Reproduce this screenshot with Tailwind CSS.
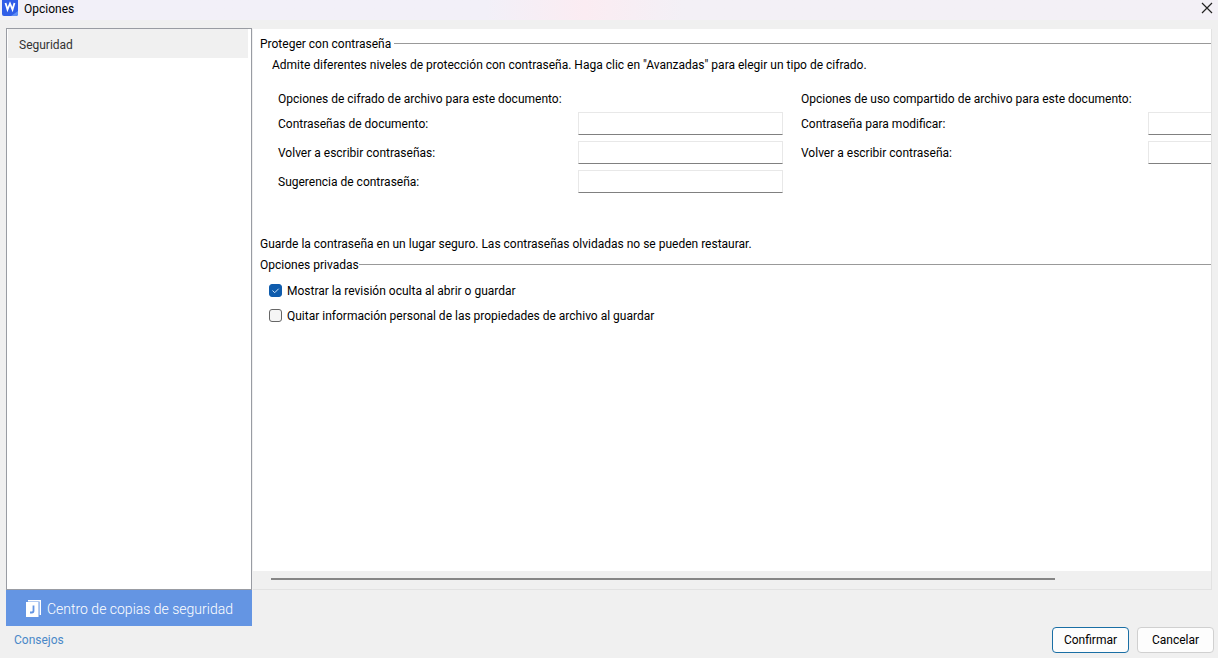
<!DOCTYPE html>
<html lang="es">
<head>
    <meta charset="UTF-8">
    <meta name="viewport" content="width=device-width, initial-scale=1">
    <title>Opciones</title>
    <script src="https://cdn.jsdelivr.net/npm/@tailwindcss/browser@4"></script>
</head>
<body class="flex min-h-screen flex-col bg-[#f0f0f0] font-[Roboto,'Open_Sans',sans-serif] text-xs leading-4 text-black">
    <!-- Barra de título -->
    <header class="flex h-5 items-start justify-between bg-linear-to-r from-[#f2f0f8] from-40% via-[#fbecf2] via-48% to-[#f3f0f6] to-56% pr-[3px] pl-[2px]">
        <div class="flex items-start gap-[6px]">
            <svg class="h-4 w-4" viewBox="0 0 16 16" aria-hidden="true">
                <path d="M0 0h16v14a2 2 0 0 1-2 2H2a2 2 0 0 1-2-2z" fill="#315de8"/>
                <path d="M9 16l7-5v3a2 2 0 0 1-2 2z" fill="#5f8df5"/>
                <path d="M3.500 3l2 6.500L8 3.500l2.500 6 2-6.500" fill="none" stroke="#fff" stroke-width="1.800"/>
            </svg>
            <h1 class="pt-px">Opciones</h1>
        </div>
        <button type="button" aria-label="Cerrar" class="p-[2px]">
            <svg class="h-3 w-3" viewBox="0 0 12 12" fill="none" stroke="#222" stroke-width="1.200">
                <path d="M1 1l10 10M11 1L1 11"/>
            </svg>
        </button>
    </header>

    <main class="flex flex-1 gap-px px-[6px] pt-2">
        <!-- Panel lateral -->
        <aside class="flex w-[246px] shrink-0 flex-col">
            <nav class="flex-1 border border-[#999ca3] bg-white pr-[3px] pl-px">
                <a href="#seguridad" class="block bg-[#f0f0f0] px-[11px] pt-2 pb-[5px] text-[#333]">Seguridad</a>
            </nav>
            <button type="button" class="flex h-9 items-center gap-[6px] bg-[#6495e3] pt-px pl-5 text-sm font-light text-white">
                <svg class="h-[17px] w-[15px]" viewBox="0 0 15 17" aria-hidden="true">
                    <path d="M2 .7h12.300V15" fill="none" stroke="#fff" stroke-width="1.400"/>
                    <rect y="2" width="12.500" height="15" fill="#fff"/>
                    <path d="M7.500 5.500v5.300q0 1.700-1.600 1.700H4" fill="none" stroke="#6495e3" stroke-width="1.800"/>
                </svg>
                Centro de copias de seguridad
            </button>
        </aside>

        <!-- Contenido -->
        <section id="seguridad" class="mt-px mb-9 flex min-w-0 flex-1 flex-col overflow-hidden border-r border-b border-[#e2e2e2] bg-white">
            <div class="flex-1 pt-[7px] pl-[7px]">
                <div class="flex items-center gap-[3px]">
                    <h2>Proteger con contraseña</h2>
                    <span class="mb-px h-px flex-1 bg-[#999]"></span>
                </div>
                <p class="mt-[5px] pl-3 whitespace-nowrap">Admite diferentes niveles de protección con contraseña. Haga clic en "Avanzadas" para elegir un tipo de cifrado.</p>

                <div class="mt-[18px] flex w-max gap-[18px] pl-[18px]">
                    <fieldset class="w-[505px]">
                        <legend class="mb-[5px]">Opciones de cifrado de archivo para este documento:</legend>
                        <div class="grid grid-cols-[300px_205px] items-center gap-y-[6px]">
                            <label for="clave">Contraseñas de documento:</label>
                            <input id="clave" type="password" class="h-[23px] border border-[#e8e8e8] border-b-[#808080] bg-white px-1">
                            <label for="clave2">Volver a escribir contraseñas:</label>
                            <input id="clave2" type="password" class="h-[23px] border border-[#e8e8e8] border-b-[#808080] bg-white px-1">
                            <label for="sugerencia">Sugerencia de contraseña:</label>
                            <input id="sugerencia" type="text" class="h-[23px] border border-[#e8e8e8] border-b-[#808080] bg-white px-1">
                        </div>
                    </fieldset>
                    <fieldset class="w-[552px]">
                        <legend class="mb-[5px]">Opciones de uso compartido de archivo para este documento:</legend>
                        <div class="grid grid-cols-[347px_205px] items-center gap-y-[6px]">
                            <label for="modificar">Contraseña para modificar:</label>
                            <input id="modificar" type="password" class="h-[23px] border border-[#e8e8e8] border-b-[#808080] bg-white px-1">
                            <label for="modificar2">Volver a escribir contraseña:</label>
                            <input id="modificar2" type="password" class="h-[23px] border border-[#e8e8e8] border-b-[#808080] bg-white px-1">
                        </div>
                    </fieldset>
                </div>

                <p class="mt-[43px]">Guarde la contraseña en un lugar seguro. Las contraseñas olvidadas no se pueden restaurar.</p>
                <div class="mt-[5px] flex items-center">
                    <h2>Opciones privadas</h2>
                    <span class="mb-px h-px flex-1 bg-[#999]"></span>
                </div>
                <div class="mt-[10px] flex flex-col gap-[9px] pl-[9px]">
                    <label class="flex items-start gap-[5px]">
                        <span class="mt-px grid h-[13px] w-[13px]">
                            <input type="checkbox" checked class="peer col-start-1 row-start-1 h-[13px] w-[13px] appearance-none rounded-[3px] border border-[#666] bg-[#f5f5f5] checked:border-[#0f5cad] checked:bg-[#0f5cad]">
                            <svg class="pointer-events-none invisible col-start-1 row-start-1 h-[13px] w-[13px] peer-checked:visible" viewBox="0 0 13 13" fill="none" stroke="#cfe4f8">
                                <path d="M3.500 6.500l2.200 2.200 4-4"/>
                            </svg>
                        </span>
                        Mostrar la revisión oculta al abrir o guardar
                    </label>
                    <label class="flex items-start gap-[5px]">
                        <input type="checkbox" class="mt-px h-[13px] w-[13px] appearance-none rounded-[3px] border border-[#666] bg-[#f5f5f5] checked:bg-[#0f5cad]">
                        Quitar información personal de las propiedades de archivo al guardar
                    </label>
                </div>
            </div>
            <!-- Barra de desplazamiento horizontal -->
            <div class="flex h-[18px] items-center bg-[#f0f0f0] px-[18px] pb-[3px]">
                <div class="h-[2px] w-[85%] bg-[#868686]"></div>
            </div>
        </section>
    </main>

    <footer class="flex h-8 items-start justify-between pr-1 pl-[14px]">
        <a href="#consejos" class="mt-[6px] text-[#4a88c8]">Consejos</a>
        <div class="mt-px flex gap-2">
            <button type="button" class="h-[26px] w-[77px] rounded border border-[#1a6fa5] bg-[#fdfdfd]">Confirmar</button>
            <button type="button" class="h-[26px] w-[77px] rounded border border-[#d0d0d0] bg-[#fdfdfd]">Cancelar</button>
        </div>
    </footer>
</body>
</html>
